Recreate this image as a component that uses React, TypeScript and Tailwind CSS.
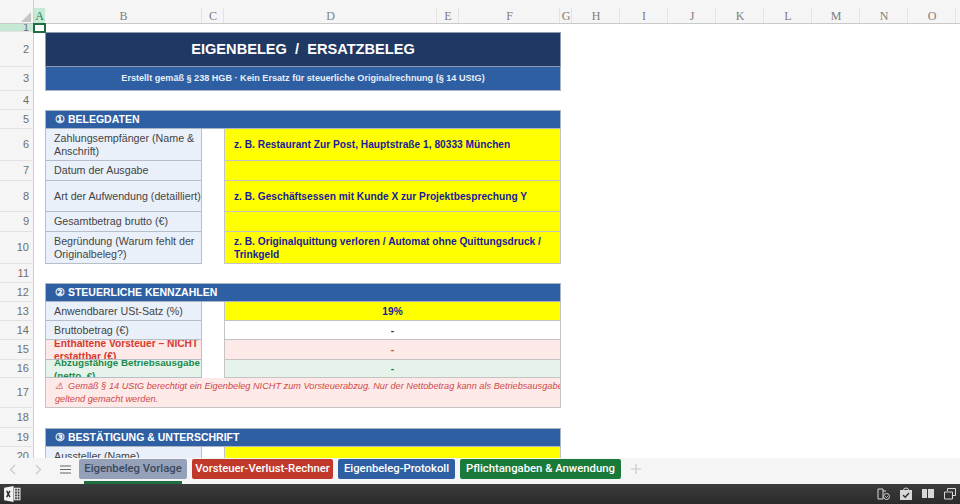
import React from "react";

const columns = [
  { name: "B", width: "w-[157px]" },
  { name: "C", width: "w-[22px]" },
  { name: "D", width: "w-[213px]" },
  { name: "E", width: "w-[22px]" },
  { name: "F", width: "w-[101px]" },
  { name: "G", width: "w-[12px]" },
  { name: "H", width: "w-[48px]" },
  { name: "I", width: "w-[48px]" },
  { name: "J", width: "w-[48px]" },
  { name: "K", width: "w-[48px]" },
  { name: "L", width: "w-[48px]" },
  { name: "M", width: "w-[48px]" },
  { name: "N", width: "w-[48px]" },
  { name: "O", width: "w-[48px]" },
];

const Row = ({ n, h, active, children }: { n: number; h: string; active?: boolean; children?: React.ReactNode }) => (
  <div className={`flex shrink-0 ${h}`}>
    <div
      className={`flex w-[34px] shrink-0 items-center justify-end border-r border-b border-r-[#cfcfcf] border-b-[#e2e2e2] pr-[4px] text-[11px] leading-none text-[#6f6f6f] ${
        active ? "bg-[#c6e9d5] text-[#2c7a50]" : "bg-[#f5f5f5]"
      }`}
    >
      {n}
    </div>
    <div className="w-[11px] shrink-0" />
    {children}
  </div>
);

const Label = ({ children, tone = "plain" }: { children: React.ReactNode; tone?: "plain" | "red" | "green" }) => (
  <div
    className={`flex w-[157px] shrink-0 items-center overflow-hidden border-x border-b border-[#b8bec8] pl-[8px] leading-[13px] whitespace-nowrap ${
      tone === "red"
        ? "bg-[#fde9e7] text-[10.2px] font-bold text-[#d63a30]"
        : tone === "green"
          ? "bg-[#e6f3ea] text-[9.8px] font-bold text-[#1c8a4a]"
          : "bg-[#eaf0f9] text-[10.7px] text-[#444444]"
    }`}
  >
    <span className="w-[148px] shrink-0">{children}</span>
  </div>
);

const Value = ({ children, tone = "yellow" }: { children?: React.ReactNode; tone?: "yellow" | "white" | "red" | "green" }) => (
  <div
    className={`ml-[22px] flex w-[337px] shrink-0 items-center border-x border-b border-[#c4c4c4] text-[10.2px] leading-[13px] font-bold ${
      tone === "yellow"
        ? "bg-[#ffff00] pl-[9px] text-[#1a1a9c]"
        : tone === "white"
          ? "justify-center bg-white text-[#333333]"
          : tone === "red"
            ? "justify-center bg-[#fde9e7] text-[#d63a30]"
            : "justify-center bg-[#e6f3ea] text-[#1c7a4a]"
    }`}
  >
    {children}
  </div>
);

const Section = ({ children }: { children: React.ReactNode }) => (
  <div className="flex w-[516px] shrink-0 items-center border border-[#a9b4c4] bg-[#2e5fa3] pl-[9px] text-[10.5px] font-bold text-white">
    {children}
  </div>
);

const Tab = ({ className, children }: { className: string; children: React.ReactNode }) => (
  <div className={`mt-[1px] flex h-[20px] items-center justify-center rounded-[2px] whitespace-nowrap ${className}`}>{children}</div>
);

const ExcelIcon = () => (
  <svg width="18" height="18" viewBox="0 0 17 17">
    <path d="M1 2.5 10 1v15l-9-1.5z" fill="#f2f2f2" />
    <path d="M11 3h5v11h-5z" fill="none" stroke="#f2f2f2" />
    <path d="M11 5.7h5M11 8.5h5M11 11.2h5M13.5 3v11" stroke="#f2f2f2" strokeWidth="0.8" />
    <path d="m3.5 5.5 3 6M6.5 5.5l-3 6" stroke="#2e2f30" strokeWidth="1.4" />
  </svg>
);

const App = () => {
  return (
    <div className="relative flex h-[504px] w-[960px] flex-col overflow-hidden bg-white font-['Liberation_Sans',Arial,sans-serif]">
      {/* column headers */}
      <div className="flex h-[24px] shrink-0 border-b border-[#c9c9c9] bg-[#f5f5f5] font-['Liberation_Serif',serif] text-[12px] text-[#7d7d7d]">
        <div className="relative w-[34px] shrink-0 border-r border-[#cfcfcf]">
          <div className="absolute top-[12px] right-[2px] h-0 w-0 border-b-[10px] border-l-[10px] border-b-[#c6c6c6] border-l-transparent" />
        </div>
        <div className="mt-[8px] flex w-[11px] shrink-0 items-center justify-center bg-[#c6e9d5] text-[#2c7a50]">A</div>
        {columns.map((c) => (
          <div key={c.name} className={`mt-[8px] flex shrink-0 items-center justify-center border-r border-[#e3e3e3] pl-[1px] ${c.width}`}>
            {c.name}
          </div>
        ))}
      </div>

      {/* selected cell A1 */}
      <div className="absolute top-[23px] left-[33px] h-[10px] w-[13px] border-2 border-[#1d6f42]" />

      {/* sheet */}
      <div className="flex min-h-0 flex-1 flex-col overflow-hidden">
        <Row n={1} h="h-[8px]" active />
        <Row n={2} h="h-[35px]">
          <div className="flex w-[516px] items-center justify-center border border-[#8d9bb0] bg-[#1f3864] text-[14.6px] font-bold whitespace-pre text-white">
            EIGENBELEG  /  ERSATZBELEG
          </div>
        </Row>
        <Row n={3} h="h-[24px]">
          <div className="flex w-[516px] items-center justify-center border-x border-b border-[#a9b4c4] bg-[#2e5fa3] text-[9.1px] font-bold text-[#e8eef8]">
            Erstellt gemäß § 238 HGB · Kein Ersatz für steuerliche Originalrechnung (§ 14 UStG)
          </div>
        </Row>
        <Row n={4} h="h-[19px]" />
        <Row n={5} h="h-[19px]">
          <Section>① BELEGDATEN</Section>
        </Row>
        <Row n={6} h="h-[32px]">
          <Label>
            Zahlungsempfänger (Name &amp;
            <br />
            Anschrift)
          </Label>
          <Value>z. B. Restaurant Zur Post, Hauptstraße 1, 80333 München</Value>
        </Row>
        <Row n={7} h="h-[20px]">
          <Label>Datum der Ausgabe</Label>
          <Value />
        </Row>
        <Row n={8} h="h-[31px]">
          <Label>Art der Aufwendung (detailliert)</Label>
          <Value>z. B. Geschäftsessen mit Kunde X zur Projektbesprechung Y</Value>
        </Row>
        <Row n={9} h="h-[20px]">
          <Label>Gesamtbetrag brutto (€)</Label>
          <Value />
        </Row>
        <Row n={10} h="h-[32px]">
          <Label>
            Begründung (Warum fehlt der
            <br />
            Originalbeleg?)
          </Label>
          <Value>
            <span>
              z. B. Originalquittung verloren / Automat ohne Quittungsdruck /
              <br />
              Trinkgeld
            </span>
          </Value>
        </Row>
        <Row n={11} h="h-[19px]" />
        <Row n={12} h="h-[19px]">
          <Section>② STEUERLICHE KENNZAHLEN</Section>
        </Row>
        <Row n={13} h="h-[19px]">
          <Label>Anwendbarer USt-Satz (%)</Label>
          <Value tone="yellow">
            <span className="w-full pr-[9px] text-center text-[#1a1a9c]">19%</span>
          </Value>
        </Row>
        <Row n={14} h="h-[19px]">
          <Label>Bruttobetrag (€)</Label>
          <Value tone="white">-</Value>
        </Row>
        <Row n={15} h="h-[20px]">
          <Label tone="red">
            Enthaltene Vorsteuer – NICHT
            <br />
            erstattbar (€)
          </Label>
          <Value tone="red">-</Value>
        </Row>
        <Row n={16} h="h-[18px]">
          <Label tone="green">
            Abzugsfähige Betriebsausgabe
            <br />
            (netto, €)
          </Label>
          <Value tone="green">-</Value>
        </Row>
        <Row n={17} h="h-[30px]">
          <div className="flex w-[516px] items-center overflow-hidden border-x border-b border-[#c4c4c4] bg-[#fde9e7] pl-[9px] text-[9.2px] leading-[12.5px] whitespace-pre text-[#cf4a4a] italic">
            <span>
              ⚠  Gemäß § 14 UStG berechtigt ein Eigenbeleg NICHT zum Vorsteuerabzug. Nur der Nettobetrag kann als Betriebsausgabe
              <br />
              geltend gemacht werden.
            </span>
          </div>
        </Row>
        <Row n={18} h="h-[20px]" />
        <Row n={19} h="h-[19px]">
          <Section>③ BESTÄTIGUNG &amp; UNTERSCHRIFT</Section>
        </Row>
        <Row n={20} h="h-[19px]">
          <Label>Aussteller (Name)</Label>
          <Value />
        </Row>
      </div>

      {/* sheet tabs */}
      <div className="relative flex h-[26px] shrink-0 items-start bg-[#f5f5f5] font-['Roboto',sans-serif] text-[11.3px] font-medium">
        <span className="mt-[6px] ml-[9px] text-[#c9c9c9]">
          <svg width="7" height="11" viewBox="0 0 7 11" fill="none" stroke="currentColor" strokeWidth="1.2">
            <path d="M6 1 1.5 5.5 6 10" />
          </svg>
        </span>
        <span className="mt-[6px] ml-[19px] text-[#c9c9c9]">
          <svg width="7" height="11" viewBox="0 0 7 11" fill="none" stroke="currentColor" strokeWidth="1.2">
            <path d="m1 1 4.5 4.5L1 10" />
          </svg>
        </span>
        <span className="mt-[6px] ml-[18px] text-[#666666]">
          <svg width="11" height="11" viewBox="0 0 11 11" fill="none" stroke="currentColor" strokeWidth="1.2">
            <path d="M0 2h11M0 5.5h11M0 9h11" />
          </svg>
        </span>
        <Tab className="ml-[8px] w-[108px] bg-[#94a1b8] text-[#3c4a5c]">Eigenbeleg Vorlage</Tab>
        <Tab className="ml-[5px] w-[141px] bg-[#c0392b] text-white">Vorsteuer-Verlust-Rechner</Tab>
        <Tab className="ml-[5px] w-[117px] bg-[#2e5fa3] text-white">Eigenbeleg-Protokoll</Tab>
        <Tab className="ml-[5px] w-[161px] bg-[#1a7a3a] text-white">Pflichtangaben &amp; Anwendung</Tab>
        <span className="mt-[5px] ml-[9px] text-[#c9c9c9]">
          <svg width="12" height="12" viewBox="0 0 12 12" fill="none" stroke="currentColor" strokeWidth="1.2">
            <path d="M6 1v10M1 6h10" />
          </svg>
        </span>
        <div className="absolute bottom-0 left-[84px] h-[3px] w-[98px] bg-[#1d6f42]" />
      </div>

      {/* taskbar */}
      <div className="flex h-[20px] shrink-0 items-center justify-between bg-gradient-to-b from-[#3a3b3c] to-[#2b2b2b] pr-[3px] pl-[3px]">
        <ExcelIcon />
        <div className="flex items-center gap-[8px] text-[#d8d8d8]">
          <svg width="14" height="14" viewBox="0 0 14 14" fill="none" stroke="currentColor">
            <path d="M1 2h5v10H1zM6 4h3" />
            <circle cx="9.5" cy="9.5" r="3" fill="#2e2f30" />
            <path d="m8 9 1.5 1.5L11 9" strokeWidth="0.8" />
          </svg>
          <svg width="14" height="14" viewBox="0 0 14 14">
            <path d="M1 3h12v10H1z" fill="currentColor" />
            <path d="M4.5 3a2.5 2 0 0 1 5 0" fill="none" stroke="currentColor" />
            <path d="m4 8 2.2 2.2L10 6" fill="none" stroke="#2e2f30" strokeWidth="1.4" />
          </svg>
          <svg width="14" height="14" viewBox="0 0 14 14">
            <path d="M1 2h5v9H1zM7 2h6v9H7z" fill="currentColor" />
          </svg>
          <svg width="14" height="14" viewBox="0 0 14 14" fill="none" stroke="currentColor">
            <path d="M4.5 4V1.5h8v7H10" />
            <path d="M1.5 5h8v7h-8z" />
          </svg>
        </div>
      </div>
    </div>
  );
};

export default App;
